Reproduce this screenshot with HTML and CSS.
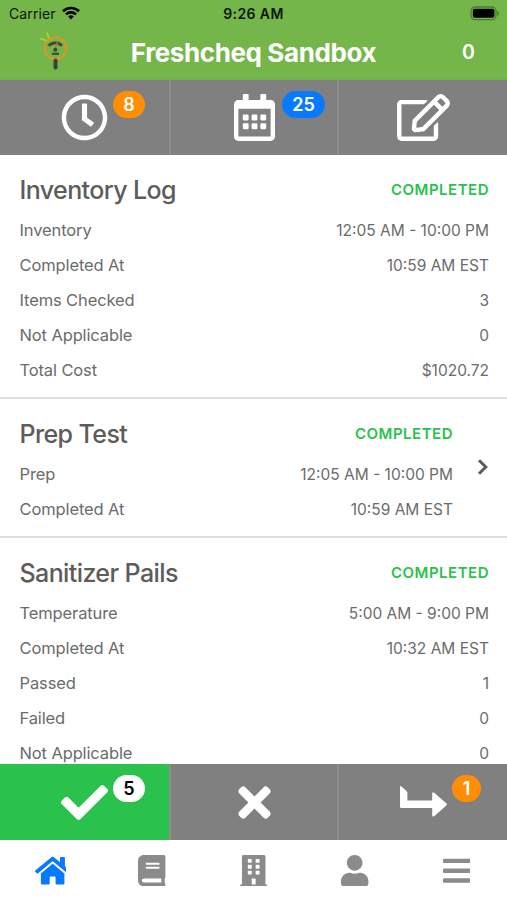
FILE: index.html
```
<!DOCTYPE html>
<html lang="en">
<head>
<meta charset="utf-8">
<title>Freshcheq Sandbox</title>
<link rel="stylesheet" href="styles.css">
</head>
<body>
<div class="app">
  <header class="header">
    <div class="status">
      <div class="carrier"><span>Carrier</span>
        <svg class="wifi" width="18" height="14" viewBox="0 0 18 14" fill="none" stroke="#000" stroke-width="2.6"><path d="M1 5.2a11.5 11.5 0 0 1 16 0M4 8.4a7.2 7.2 0 0 1 10 0"/><path d="M9 13.4L6.2 10.6a4 4 0 0 1 5.6 0z" fill="#000" stroke="none"/></svg>
      </div>
      <div class="time">9:26 AM</div>
      <svg class="battery" width="30" height="15" viewBox="0 0 30 15"><rect x="1" y="1" width="25" height="12.6" rx="4" fill="none" stroke="#4c7b30" stroke-width="1.3"/><rect x="2.8" y="2.8" width="21.6" height="9" rx="2" fill="#000"/><path d="M27.3 5a2.5 2.5 0 0 1 0 4.8z" fill="#4c7b30"/></svg>
    </div>
    <div class="titlebar">
      <svg class="logo" width="32" height="40" viewBox="0 0 32 40" fill="none"><path d="M3 7.5l8 2.500M10 1.500l2.500 7" stroke="#a8d62c" stroke-width="1.7"/><path d="M11.500 14.600Q18.500 8.800 25 14.600" stroke="#3f4a35" stroke-width="3"/><path d="M18.500 17l2-6" stroke="#d9602b" stroke-width="1.5"/><circle cx="18.3" cy="18.8" r="2" fill="#3f4a35"/><path d="M15 22.800h7" stroke="#3f4a35" stroke-width="2.2"/><circle cx="18.500" cy="17.300" r="10.800" stroke="#dc9527" stroke-width="2"/><path d="M18.500 29.500v7" stroke="#3b4039" stroke-width="4" stroke-linecap="round"/></svg>
      <h1>Freshcheq Sandbox</h1>
      <span class="count">0</span>
    </div>
  </header>

  <nav class="tabs">
    <div class="tab"><svg width="47" height="47" viewBox="0 0 512 512"><path d="M256 8C119 8 8 119 8 256s111 248 248 248 248-111 248-248S393 8 256 8zm0 448c-110.500 0-200-89.500-200-200S145.500 56 256 56s200 89.500 200 200-89.500 200-200 200zm61.800-104.400l-84.900-61.700c-3.100-2.300-4.900-5.900-4.900-9.700V116c0-6.600 5.400-12 12-12h32c6.600 0 12 5.400 12 12v141.700l66.800 48.600c5.400 3.900 6.500 11.400 2.600 16.800L334.600 349c-3.900 5.300-11.400 6.500-16.800 2.600z"/></svg><span class="badge orange">8</span></div>
    <div class="tab"><svg width="41" height="47" viewBox="0 0 448 512"><path d="M148 288h-40c-6.600 0-12-5.400-12-12v-40c0-6.600 5.400-12 12-12h40c6.600 0 12 5.400 12 12v40c0 6.600-5.400 12-12 12zm108-12v-40c0-6.600-5.400-12-12-12h-40c-6.600 0-12 5.400-12 12v40c0 6.600 5.400 12 12 12h40c6.600 0 12-5.400 12-12zm96 0v-40c0-6.600-5.400-12-12-12h-40c-6.600 0-12 5.400-12 12v40c0 6.600 5.400 12 12 12h40c6.600 0 12-5.400 12-12zm-96 96v-40c0-6.600-5.400-12-12-12h-40c-6.600 0-12 5.400-12 12v40c0 6.600 5.400 12 12 12h40c6.600 0 12-5.400 12-12zm-96 0v-40c0-6.600-5.400-12-12-12h-40c-6.600 0-12 5.400-12 12v40c0 6.600 5.400 12 12 12h40c6.600 0 12-5.400 12-12zm192 0v-40c0-6.600-5.400-12-12-12h-40c-6.600 0-12 5.400-12 12v40c0 6.600 5.400 12 12 12h40c6.600 0 12-5.400 12-12zm96-260v352c0 26.500-21.500 48-48 48H48c-26.500 0-48-21.500-48-48V112c0-26.500 21.500-48 48-48h48V12c0-6.600 5.400-12 12-12h40c6.600 0 12 5.400 12 12v52h128V12c0-6.600 5.400-12 12-12h40c6.600 0 12 5.400 12 12v52h48c26.500 0 48 21.500 48 48zm-48 346V160H48v298c0 3.300 2.700 6 6 6h340c3.300 0 6-2.700 6-6z"/></svg><span class="badge blue">25</span></div>
    <div class="tab"><svg width="53" height="47" viewBox="0 0 576 512"><path d="M402.300 344.900l32-32c5-5 13.700-1.500 13.700 5.700V464c0 26.500-21.500 48-48 48H48c-26.500 0-48-21.500-48-48V112c0-26.500 21.500-48 48-48h273.500c7.100 0 10.700 8.600 5.700 13.700l-32 32c-1.500 1.500-3.500 2.300-5.700 2.300H48v352h352V350.500c0-2.100.8-4.100 2.300-5.600zm156.600-201.800L296.300 405.700l-90.400 10c-26.200 2.900-48.500-19.200-45.600-45.600l10-90.400L432.900 17.100c22.900-22.900 59.900-22.900 82.700 0l43.200 43.200c22.900 22.900 22.900 60 .1 82.800zM460.100 174L402 115.900 216.200 301.800l-7.300 65.300 65.300-7.300L460.100 174zm64.800-79.700l-43.200-43.200c-4.100-4.100-10.800-4.100-14.800 0L436 82l58.100 58.100 30.900-30.900c4-4.200 4-10.800-.1-14.900z"/></svg></div>
  </nav>

  <main class="list">
    <section class="card">
      <div class="body">
        <div class="head"><h2>Inventory Log</h2><strong>COMPLETED</strong></div>
        <div class="row"><span>Inventory</span><em>12:05 AM - 10:00 PM</em></div>
        <div class="row"><span>Completed At</span><em>10:59 AM EST</em></div>
        <div class="row"><span>Items Checked</span><em>3</em></div>
        <div class="row"><span>Not Applicable</span><em>0</em></div>
        <div class="row"><span>Total Cost</span><em>$1020.72</em></div>
      </div>
    </section>
    <section class="card">
      <div class="body">
        <div class="head"><h2>Prep Test</h2><strong>COMPLETED</strong></div>
        <div class="row"><span>Prep</span><em>12:05 AM - 10:00 PM</em></div>
        <div class="row"><span>Completed At</span><em>10:59 AM EST</em></div>
      </div>
      <svg class="chevron" width="12" height="18" viewBox="0 0 12 18" fill="none" stroke="#5c5c5c" stroke-width="3"><path d="M2 2.200L8.800 9 2 15.800"/></svg>
    </section>
    <section class="card">
      <div class="body">
        <div class="head"><h2>Sanitizer Pails</h2><strong>COMPLETED</strong></div>
        <div class="row"><span>Temperature</span><em>5:00 AM - 9:00 PM</em></div>
        <div class="row"><span>Completed At</span><em>10:32 AM EST</em></div>
        <div class="row"><span>Passed</span><em>1</em></div>
        <div class="row"><span>Failed</span><em>0</em></div>
        <div class="row"><span>Not Applicable</span><em>0</em></div>
      </div>
    </section>
  </main>

  <nav class="tabs">
    <div class="tab active"><svg width="47" height="47" viewBox="0 0 512 512"><path d="M173.898 439.404l-166.400-166.400c-9.997-9.997-9.997-26.206 0-36.204l36.203-36.204c9.997-9.998 26.207-9.998 36.204 0L192 312.690 432.095 72.596c9.997-9.997 26.207-9.997 36.204 0l36.203 36.204c9.997 9.997 9.997 26.206 0 36.204l-294.400 294.401c-9.998 9.997-26.207 9.997-36.204-.001z"/></svg><span class="badge white">5</span></div>
    <div class="tab"><svg width="33" height="47" viewBox="0 0 352 512"><path d="M242.720 256l100.070-100.070c12.280-12.280 12.280-32.190 0-44.480l-22.240-22.240c-12.280-12.280-32.190-12.280-44.480 0L176 189.280 75.930 89.210c-12.280-12.280-32.190-12.280-44.480 0L9.210 111.450c-12.280 12.280-12.280 32.190 0 44.480L109.280 256 9.210 356.070c-12.280 12.280-12.280 32.190 0 44.480l22.240 22.240c12.280 12.280 32.200 12.280 44.480 0L176 322.720l100.070 100.070c12.280 12.280 32.200 12.280 44.480 0l22.240-22.240c12.280-12.280 12.280-32.190 0-44.480L242.720 256z"/></svg></div>
    <div class="tab"><svg width="47" height="47" viewBox="0 0 47 47"><path d="M0 8.200q0-1.800 1.400-.7L6.500 12q.9.800.9 2v7.500h24.800v-6.700q0-2.500 2-1L46.300 24.200q1.200 1.200 0 2.400L34.500 36.900q-2.300 1.500-2.300-1V29H1.300Q0 29 0 27.700z"/></svg><span class="badge orange one">1</span></div>
  </nav>

  <nav class="bottom">
    <div class="item home"><svg width="31.400" height="31.400" viewBox="0 0 512 512"><path d="M280.370 148.260L96 300.110V464a16 16 0 0 0 16 16l112.060-.29a16 16 0 0 0 15.920-16V368a16 16 0 0 1 16-16h64a16 16 0 0 1 16 16v95.640a16 16 0 0 0 16 16.050L464 480a16 16 0 0 0 16-16V300L295.670 148.260a12.190 12.190 0 0 0-15.300 0zM571.600 251.470L488 182.560V44.050a12 12 0 0 0-12-12h-56a12 12 0 0 0-12 12v72.610L318.470 43a48 48 0 0 0-61 0L4.340 251.470a12 12 0 0 0-1.600 16.900l25.500 31A12 12 0 0 0 45.150 301l235.220-193.740a12.190 12.190 0 0 1 15.300 0L530.900 301a12 12 0 0 0 16.900-1.600l25.500-31a12 12 0 0 0-1.700-16.930z"/></svg></div>
    <div class="item"><svg width="27.400" height="31.400" viewBox="0 0 448 512"><path d="M448 360V24c0-13.300-10.700-24-24-24H96C43 0 0 43 0 96v320c0 53 43 96 96 96h328c13.300 0 24-10.700 24-24v-16c0-7.500-3.500-14.300-8.900-18.700-4.200-15.400-4.200-59.300 0-74.700 5.400-4.300 8.900-11.100 8.900-18.600zM128 134c0-3.300 2.700-6 6-6h212c3.300 0 6 2.700 6 6v20c0 3.300-2.700 6-6 6H134c-3.300 0-6-2.700-6-6v-20zm0 64c0-3.300 2.700-6 6-6h212c3.300 0 6 2.700 6 6v20c0 3.300-2.700 6-6 6H134c-3.300 0-6-2.700-6-6v-20zm253.400 250H96c-17.700 0-32-14.300-32-32 0-17.600 14.400-32 32-32h285.400c-1.900 17.100-1.900 46.900 0 64z"/></svg></div>
    <div class="item"><svg width="27.400" height="31.400" viewBox="0 0 448 512"><path d="M436 480h-20V24c0-13.300-10.700-24-24-24H56C42.700 0 32 10.700 32 24v456H12c-6.600 0-12 5.400-12 12v20h448v-20c0-6.600-5.400-12-12-12z"/><g fill="#fff"><rect x="128" y="64" width="64" height="64" rx="12"/><rect x="256" y="64" width="64" height="64" rx="12"/><rect x="128" y="160" width="64" height="64" rx="12"/><rect x="256" y="160" width="64" height="64" rx="12"/><rect x="128" y="256" width="64" height="64" rx="12"/><rect x="256" y="256" width="64" height="64" rx="12"/><path d="M192 480v-84q0-12 12-12h40q12 0 12 12v84z"/></g></svg></div>
    <div class="item"><svg width="27.400" height="31.400" viewBox="0 0 448 512"><path d="M224 256c70.700 0 128-57.300 128-128S294.700 0 224 0 96 57.300 96 128s57.300 128 128 128zm89.600 32h-16.700c-22.200 10.200-46.900 16-72.900 16s-50.600-5.800-72.900-16h-16.700C60.200 288 0 348.200 0 422.400V464c0 26.500 21.500 48 48 48h352c26.500 0 48-21.500 48-48v-41.600c0-74.200-60.200-134.400-134.400-134.400z"/></svg></div>
    <div class="item"><svg width="27.400" height="31.400" viewBox="0 0 448 512"><rect y="60" width="448" height="72" rx="16"/><rect y="220" width="448" height="72" rx="16"/><rect y="380" width="448" height="72" rx="16"/></svg></div>
  </nav>
</div>
</body>
</html>
```
FILE: styles.css
```
* { box-sizing: border-box; }
body { margin: 0; font-family: Inter, "Liberation Sans", sans-serif; background: #fff; }
.app { width: 507px; height: 900px; display: flex; flex-direction: column; overflow: hidden; }
h1, h2 { margin: 0; }
em { font-style: normal; }
svg { display: block; flex: none; }

.header { height: 80px; flex: none; background: #75b64b; border-bottom: 1px solid #7ba95a; }
.status { height: 28px; padding: 0 5px 0 9px; display: grid; grid-template-columns: 1fr auto 1fr; align-items: center; font-size: 14px; color: #0c1407; }
.carrier { display: flex; align-items: center; gap: 6px; letter-spacing: .1px; }
.carrier span, .time { margin-top: -1px; }
.wifi { margin-top: -2px; }
.time { font-weight: 600; padding-right: 4px; letter-spacing: .4px; }
.battery { justify-self: end; margin-right: 2px; margin-top: -1px; }
.titlebar { height: 51px; display: grid; grid-template-columns: 75px 1fr 75px; align-items: center; color: #fff; }
.logo { margin: 0 0 5px 37px; align-self: center; }
h1 { font-size: 26px; font-weight: 700; text-align: center; letter-spacing: -.4px; line-height: 32px; margin-top: -2px; }
.count { font-size: 19.5px; font-weight: 600; text-align: center; margin-top: -3px; padding-right: 2px; }

.tabs { height: 76px; flex: none; display: grid; grid-template-columns: 169px 168px 170px; background: #808080; }
.header + .tabs { height: 75px; }
.tab { position: relative; display: flex; align-items: center; justify-content: center; fill: #fff; }
.tab + .tab { border-left: 2px solid #8d8d8d; }
.tab.active { background: #2ac24d; }
.badge { position: absolute; left: 113px; top: 11px; min-width: 32px; height: 27px; padding: 0 10px; border-radius: 14px; font-size: 18px; font-weight: 600; line-height: 27px; text-align: center; color: #fff; }
.orange { background: #ff8e05; }
.blue { background: #087aff; left: 111px; width: 43px; padding: 0; }
.white { background: #fff; color: #000; }
.one { left: 113px; min-width: 29px; padding: 0; width: 29px; }

.list { flex: 1; min-height: 0; overflow: hidden; color: #6b6b6b; }
.card { display: flex; align-items: center; padding: 15px 18px 9px 19.5px; border-bottom: 2px solid #dfdfdf; }
.body { flex: 1; }
.head { height: 43px; display: flex; justify-content: space-between; align-items: flex-start; line-height: 40px; }
h2 { font-size: 25px; font-weight: 500; color: #5c5c5c; letter-spacing: -.6px; }
strong { font-size: 15px; font-weight: 600; color: #2ac24d; letter-spacing: .5px; }
.row { height: 35px; display: flex; justify-content: space-between; align-items: center; font-size: 16.5px; }
.row span { letter-spacing: -.12px; margin-top: -2px; }
.row em { font-size: 15.5px; margin-top: -1px; }
.chevron { margin: -7px 0 0 24px; }

.bottom { height: 60px; flex: none; display: grid; grid-template-columns: repeat(5, 1fr); background: #fff; fill: #8b8b8b; }
.item { display: flex; justify-content: center; align-items: center; padding-top: 1px; }
.home { fill: #087aff; }
```
